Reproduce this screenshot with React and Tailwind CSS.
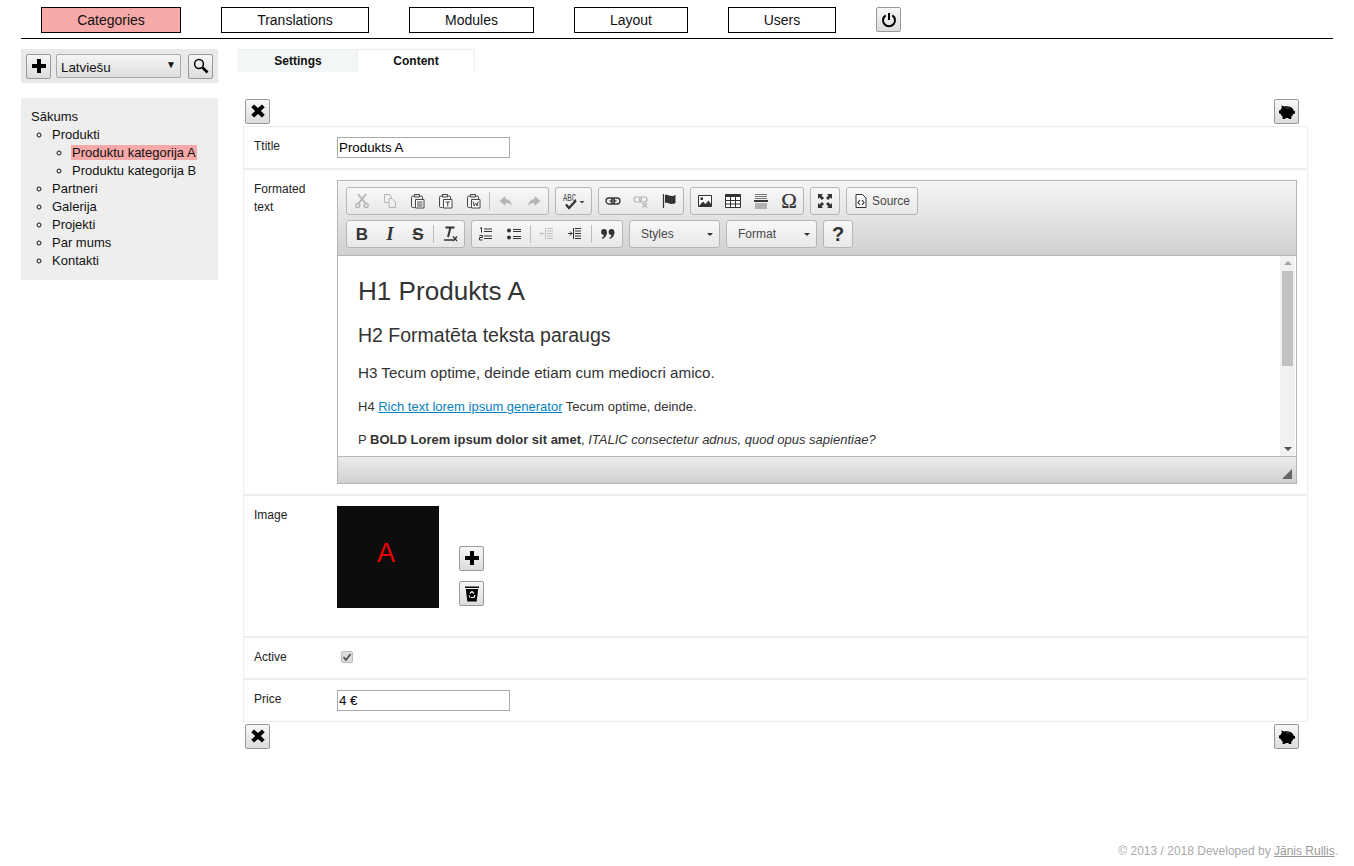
import React from "react";

const S = ({ size = 16, children, className = "", vb = "0 0 16 16" }) => (
  <svg width={size} height={size} viewBox={vb} className={className} aria-hidden="true">{children}</svg>
);

const Plus = () => <S size={16} className="-mt-[1px]"><path d="M6 1h4v5h5v4h-5v5H6v-5H1V6h5z" fill="#000" /></S>;
const Cross = () => <S size={14} className="-mt-[1px] ml-[1px]"><path d="M3.500.500 8 4.600 12.500.500 15.700 3.700 11.300 8l4.400 4.300-3.200 3.200L8 11.400 3.500 15.500.3 12.300 4.700 8 .3 3.700z" fill="#000" /></S>;
const Pig = () => (
  <S size={18} vb="0 0 18 18">
    <path d="M3.200 2.500 6.500 3.600C8 3.100 10.500 3.100 12 3.800 14.200 4.700 15.400 6.300 15.600 7.700L17 8V10.500L15.300 10.900C14.800 12.300 14 13.100 13.300 13.600V16H10.800L10.500 14.900C9.500 15.100 8.400 15.100 7.500 14.900L7.200 16H4.600V13.600C3.500 12.800 2.800 11.800 2.500 10.700L1 10.300V7.500L2.400 7.200C2.800 6.200 3.300 5.400 4 4.800Z" fill="#000" />
    <path d="M8 5h3.500" stroke="#555" strokeWidth="1" />
  </S>
);
const Search = () => (
  <S size={16} className="-mt-[1px]"><circle cx="6" cy="6" r="4.400" fill="none" stroke="#000" strokeWidth="1.500" /><path d="m9.500 9.500 5 5" stroke="#000" strokeWidth="2.600" /></S>
);
const Power = () => (
  <S size={16}><path d="M8 1v7" stroke="#000" strokeWidth="2" /><path d="M4.700 3.300a6 6 0 1 0 6.600 0" fill="none" stroke="#000" strokeWidth="2" /></S>
);
const Bin = () => (
  <S size={18} vb="0 0 18 18">
    <path d="M2 1.500h14v1.500H2z" fill="#000" />
    <path d="M2.800 4h12.400l-1.500 12.500H4.300z" fill="#000" />
    <path d="M7 8.500 9 6.500l2 2M12 10l-1 2.500H8M6 10.500l1 2" fill="none" stroke="#fff" strokeWidth="1.100" />
  </S>
);

const gray = "#b5b5b5";
const dk = "#474747";
const Cut = () => <S><g fill="none" stroke={gray} strokeWidth="1.800"><path d="M4 1 11.500 10.500M12 1 4.500 10.500" /><circle cx="3.800" cy="12.500" r="2" strokeWidth="1.400" /><circle cx="12.200" cy="12.500" r="2" strokeWidth="1.400" /></g></S>;
const Copy = () => <S><path d="M2.500 1.500h5l2 2.500v1.500M7 5.500h3l3.500 3.500v5.500H7z M2.500 1.500v8H7" fill="none" stroke={gray} /></S>;
const Clip = ({ children }) => (
  <S>
    <path d="M4 3H2.800C2 3 1.500 3.500 1.500 4.200v9.300c0 .6.500 1 1 1H4.500M10 3h1.500c.6 0 1 .5 1 1.200V6" fill="none" stroke={dk} strokeWidth="1" />
    <path d="M4.500 1.500h5V4h-5z" fill="#e8e8e8" stroke={dk} />
    <path d="M5.500 6.500h8.500v8.500H5.500z" fill="#fff" stroke={dk} />
    {children}
  </S>
);
const Paste = () => <Clip><path d="M7 9h5.500M7 11h5.500M7 13h5.500" stroke={dk} /></Clip>;
const PasteT = () => <Clip><path d="M7.500 9h4.500M9.750 9v4.500" stroke={dk} strokeWidth="1.100" /></Clip>;
const PasteW = () => <Clip><path d="M7 8.500 8.200 13l1.500-3 1.500 3 1-4.500" stroke={dk} fill="none" /></Clip>;
const Undo = () => <S><path d="M7.500 3 1.500 8l6 5v-3c2.700 0 4.800.700 6.500 2.700C13.500 9 11 6.500 7.500 6z" fill={gray} /></S>;
const Redo = () => <S><path d="M8.500 3l6 5-6 5v-3C5.800 10 3.700 10.700 2 12.700 2.500 9 5 6.500 8.500 6z" fill={gray} /></S>;
const Spell = () => (
  <svg width="24" height="20" viewBox="0 0 24 20" aria-hidden="true">
    <text x="1" y="9.500" fontSize="11" fontFamily="'Liberation Mono',monospace" fill={dk} textLength="13" lengthAdjust="spacingAndGlyphs">ABC</text>
    <path d="M4 13.500 7 17 14 9.500" fill="none" stroke="#333" strokeWidth="2.200" />
    <path d="M17.500 10h5L20 12.500z" fill={dk} />
  </svg>
);
const Link = () => <S><rect x="1" y="5" width="8.500" height="6" rx="3" fill="none" stroke="#333" strokeWidth="1.300" /><rect x="6.500" y="5" width="8.500" height="6" rx="3" fill="none" stroke="#333" strokeWidth="1.300" /><path d="M4.500 8h7" stroke="#333" strokeWidth="1.200" /></S>;
const Unlink = () => <S><rect x="1" y="4" width="7.500" height="5" rx="2.500" fill="none" stroke={gray} strokeWidth="1.200" /><rect x="6.500" y="4" width="7.500" height="5" rx="2.500" fill="none" stroke={gray} strokeWidth="1.200" /><path d="m9.500 10 4.500 4.500m0-4.500-4.500 4.500" stroke={gray} strokeWidth="1.300" /></S>;
const Flag = () => <S><path d="M2.500 1v14" stroke="#333" strokeWidth="1.200" /><path d="M4 2c3-1 4 1 6.500 1 1.500 0 3-.500 4-1v8c-1.200.700-2.500 1-4 1-2.500 0-3.500-2-6.500-1z" fill="#333" /></S>;
const Image = () => <S><path d="M1.500 2.500h13v11h-13z" fill="#fff" stroke="#333" /><path d="M2 13l4-4.500 2.500 2.500 3-3.500L14 11v2.500H2z" fill="#333" /><rect x="3.500" y="4.500" width="2.500" height="2.500" fill="#333" /></S>;
const Table = () => <S><path d="M.500 1.500h15v13H.500z" fill="#fff" stroke="#333" /><path d="M.500 1.500h15v2.500H.500z" fill="#333" /><path d="M.500 7.500h15M.500 11h15M5.500 4v10.500M10.500 4v10.500" stroke="#333" /></S>;
const HRule = () => <S><path d="M2 1.500h12M2 3.500h12M2 5.500h12M2 11h12M2 13h12M2 15h12" stroke="#777" /><path d="M1 8h14" stroke="#222" strokeWidth="1.800" /></S>;
const Omega = () => <span className="text-[21px] leading-none text-[#333] font-['Liberation_Serif',serif] font-normal [-webkit-text-stroke:0.2px_#333]">Ω</span>;
const Max = () => <S><path d="M1 1h5L4.500 2.500 7 5 5 7 2.500 4.500 1 6zM15 1v5l-1.500-1.500L11 7 9 5l2.500-2.500L10 1zM1 15v-5l1.500 1.500L5 9l2 2-2.500 2.500L6 15zM15 15h-5l1.500-1.500L9 11l2-2 2.500 2.500L15 10z" fill="#333" /></S>;
const SourceI = () => <S><path d="M3 1.500h6.500l3.500 3.500v9.500H3z" fill="#fff" stroke="#333" /><path d="M7 7 5 9.500 7 12M9 7l2 2.500L9 12" fill="none" stroke="#333" strokeWidth="1.200" /></S>;
const Bold = () => <span className="text-[17px] leading-none font-bold text-[#333] font-['Liberation_Sans',sans-serif]">B</span>;
const Italic = () => <span className="text-[18px] leading-none italic font-bold text-[#333] font-['Liberation_Serif',serif]">I</span>;
const Strike = () => <span className="text-[17px] leading-none font-bold text-[#333] line-through font-['Liberation_Sans',sans-serif]">S</span>;
const Clear = () => <S><path d="M3.500 1.500h9M8.500 1.500 6 11" stroke="#333" strokeWidth="2" fill="none" /><path d="M2 14h9" stroke="#333" strokeWidth="1.500" /><path d="m11 10.500 4 4.500m0-4.500-4 4.500" stroke="#333" strokeWidth="1.300" /></S>;
const OList = () => <S><path d="M6 3h8M6 5.500h8M6 10h8M6 12.500h8" stroke="#333" /><path d="M2 2.500 3.500 1.500V6.500M1.500 9.500h3v2h-3v2.500h3" fill="none" stroke="#333" /></S>;
const UList = () => <S><circle cx="3" cy="4.500" r="2" fill="#333" /><circle cx="3" cy="11.500" r="2" fill="#333" /><path d="M7 3.500h8M7 5.500h8M7 10.500h8M7 12.500h8" stroke="#333" /></S>;
const Outdent = () => <S><path d="M8 2.500h6M8 5h6M8 7.500h6M8 10h6M8 12.500h6" stroke="#c0c0c0" /><path d="M6.500 2v11" stroke="#c0c0c0" /><path d="M1 7.500h4M1 7.500l2-2M1 7.500l2 2" stroke="#c0c0c0" fill="none" /></S>;
const Indent = () => <S><path d="M8 2.500h6M8 5h6M8 7.500h6M8 10h6M8 12.500h6" stroke="#333" /><path d="M6.500 2v11" stroke="#333" /><path d="M1 7.500h4M5 7.500l-2-2M5 7.500l-2 2" stroke="#333" fill="none" /></S>;
const Quote = () => <S><circle cx="4" cy="6" r="2.900" fill="#333" /><path d="M6.900 6C7 9.500 5 12 2.300 13L1.800 12C3.300 11 4 9.500 4 8z" fill="#333" /><circle cx="11.500" cy="6" r="2.900" fill="#333" /><path d="M14.400 6C14.500 9.500 12.500 12 9.800 13L9.300 12C10.800 11 11.500 9.500 11.500 8z" fill="#333" /></S>;

const Tb = ({ children }) => (
  <div className="w-[28px] h-[26px] flex items-center justify-center shrink-0">{children}</div>
);
const Sep = ({ wide }) => <div className={"w-px h-[18px] bg-[#bcbcbc] self-center shrink-0 mr-[2px] " + (wide ? "ml-[2px]" : "ml-[1px]")} />;
const Group = ({ children, className = "" }) => (
  <div className={"flex h-[28px] items-center rounded-[3px] border border-[#b6b6b6] bg-gradient-to-b from-[#f8f8f8] to-[#e8e8e8] pl-[1px] " + className}>
    {children}
  </div>
);
const Combo = ({ label, w }) => (
  <div className={"flex h-[28px] items-center justify-between rounded-[3px] border border-[#b6b6b6] bg-gradient-to-b from-[#f8f8f8] to-[#e8e8e8] pl-[11px] pr-[6px] text-[12px] text-[#484848] " + w}>
    <span>{label}</span>
    <span className="w-0 h-0 border-x-[3px] border-x-transparent border-t-[3px] border-t-[#333] mt-[1px]" />
  </div>
);

const IconBtn = ({ children }) => (
  <button className="w-[25px] h-[25px] shrink-0 flex items-center justify-center rounded-[2px] border border-[#999] bg-gradient-to-b from-[#f7f7f7] to-[#dcdcdc]">
    {children}
  </button>
);

const NavBtn = ({ children, w, active }) => (
  <div className={"h-[26px] border border-black flex items-center justify-center text-[14px] text-[#111] " + w + " " + (active ? "bg-[#f7a8a8]" : "bg-white")}>
    {children}
  </div>
);

const Row = ({ label, children, className = "" }) => (
  <div className={"flex items-start pt-[10px] pb-[10px] pl-[10px] " + className}>
    <div className="w-[83px] shrink-0 text-[12px] leading-[18px] text-[#222]">{label}</div>
    <div className="flex-1 min-w-0">{children}</div>
  </div>
);

const TextInput = ({ value }) => (
  <input readOnly value={value} className="block w-[173px] h-[21px] border border-[#aaa] px-px text-[13.33px] text-black bg-white outline-none" />
);

export default function App() {
  return (
    <div className="w-[1354px] h-[866px] overflow-hidden bg-white font-['Liberation_Sans',Arial,sans-serif] text-[13px] text-[#111]">
      <div className="px-[21px]">
        <nav className="flex items-start gap-[40px] pl-[20px] pt-[7px] h-[31px] box-content border-b border-black">
          <NavBtn w="w-[140px]" active>Categories</NavBtn>
          <NavBtn w="w-[148px]">Translations</NavBtn>
          <NavBtn w="w-[125px]">Modules</NavBtn>
          <NavBtn w="w-[114px]">Layout</NavBtn>
          <NavBtn w="w-[108px]">Users</NavBtn>
          <IconBtn><Power /></IconBtn>
        </nav>

        <div className="flex mt-[10px]">
          <aside className="w-[197px] shrink-0">
            <div className="flex items-start h-[34px] bg-[#e9e9e9] pt-[5px] pl-[5px]">
              <IconBtn><Plus /></IconBtn>
              <div className="ml-[5px] w-[125px] h-[24px] rounded-[2px] border border-[#aaa] bg-gradient-to-b from-[#f5f5f5] to-[#dedede] flex items-center justify-between pl-[4px] pr-[4px] text-[13.33px]">
                <span className="mt-[3px]">Latviešu</span>
                <span className="text-[10px] leading-none mb-[3px]">▼</span>
              </div>
              <div className="ml-[7px]"><IconBtn><Search /></IconBtn></div>
            </div>
            <div className="mt-[15px] bg-[#eeeeee] pt-[10px] pb-[10px] pl-[10px] leading-[18px]">
              <div>Sākums</div>
              <ul className="list-[circle] pl-[21px]">
                <li>Produkti
                  <ul className="list-[circle] pl-[20px]">
                    <li><span className="bg-[#f7a8a8] px-px -ml-px">Produktu kategorija A</span></li>
                    <li>Produktu kategorija B</li>
                  </ul>
                </li>
                <li>Partneri</li>
                <li>Galerija</li>
                <li>Projekti</li>
                <li>Par mums</li>
                <li>Kontakti</li>
              </ul>
            </div>
          </aside>

          <main className="ml-[20px] w-[1095px] shrink-0">
            <div className="flex h-[23px] text-[12px] font-bold leading-[22px]">
              <div className="w-[119px] text-center bg-[#f2f6f7] border-t border-l border-[#eeeeee] box-border">Settings</div>
              <div className="w-[118px] text-center bg-white border-t border-x border-[#eeeeee] box-border">Content</div>
            </div>

            <div className="ml-[5px] w-[1065px]">
              <div className="flex justify-between pl-[2px] pr-[9px] mt-[27px] mb-[2px]">
                <IconBtn><Cross /></IconBtn>
                <IconBtn><Pig /></IconBtn>
              </div>

              <div className="border border-[#eeeeee] divide-y-2 divide-[#eeeeee]">
                <Row label="Ttitle"><TextInput value="Produkts A" /></Row>
                <Row label={<>Formated<br />text</>}>
                  <div className="w-[960px] h-[304px] border border-[#b6b6b6] flex flex-col">
                    <div className="h-[75px] shrink-0 bg-gradient-to-b from-[#f5f5f5] to-[#cfd1cf] border-b border-[#b6b6b6] pl-[8px] pt-[6px]">
                      <div className="flex gap-[6px]">
                        <Group className="w-[203px]">
                          <Tb><Cut /></Tb><Tb><Copy /></Tb><Tb><Paste /></Tb><Tb><PasteT /></Tb><Tb><PasteW /></Tb>
                          <Sep />
                          <Tb><Undo /></Tb><Tb><Redo /></Tb>
                        </Group>
                        <Group className="w-[37px] justify-center !pl-0"><Spell /></Group>
                        <Group className="w-[86px] !pl-0"><Tb><Link /></Tb><Tb><Unlink /></Tb><Tb><Flag /></Tb></Group>
                        <Group className="w-[114px] !pl-0"><Tb><Image /></Tb><Tb><Table /></Tb><Tb><HRule /></Tb><Tb><Omega /></Tb></Group>
                        <Group className="w-[30px] !pl-0"><Tb><Max /></Tb></Group>
                        <Group className="w-[72px] !pl-[6px] gap-[3px] text-[12px] text-[#484848]"><SourceI /><span>Source</span></Group>
                      </div>
                      <div className="flex gap-[6px] mt-[5px]">
                        <Group className="w-[119px]">
                          <Tb><Bold /></Tb><Tb><Italic /></Tb><Tb><Strike /></Tb>
                          <Sep />
                          <Tb><Clear /></Tb>
                        </Group>
                        <Group className="w-[152px] !pl-0">
                          <Tb><OList /></Tb><Tb><UList /></Tb>
                          <Sep wide />
                          <Tb><Outdent /></Tb><Tb><Indent /></Tb>
                          <Sep wide />
                          <Tb><Quote /></Tb>
                        </Group>
                        <Combo label="Styles" w="w-[91px]" />
                        <Combo label="Format" w="w-[91px]" />
                        <Group className="w-[30px] !pl-0 justify-center"><span className="text-[20px] leading-none font-bold text-[#333]">?</span></Group>
                      </div>
                    </div>

                    <div className="flex-1 min-h-0 flex bg-white">
                      <div className="flex-1 min-w-0 overflow-hidden pl-[20px] pt-[19px] text-[13px] leading-[20px] text-[#333]">
                        <h1 className="text-[26.1px] leading-[32px] font-normal">H1 Produkts A</h1>
                        <h2 className="mt-[15px] text-[19.5px] leading-[26px] font-normal">H2 Formatēta teksta paraugs</h2>
                        <h3 className="mt-[15px] text-[15.2px] leading-[20px] font-normal">H3 Tecum optime, deinde etiam cum mediocri amico.</h3>
                        <p className="mt-[14px]">H4 <span className="text-[#0782c1] underline">Rich text lorem ipsum generator</span> Tecum optime, deinde.</p>
                        <p className="mt-[13px]">P <b>BOLD Lorem ipsum dolor sit amet</b>, <i>ITALIC consectetur adnus, quod opus sapientiae?</i></p>
                      </div>
                      <div className="w-[15px] mr-px shrink-0 bg-[#f1f1f1] flex flex-col items-center">
                        <span className="mt-[5px] w-0 h-0 border-x-[4px] border-x-transparent border-b-[4px] border-b-[#a3a3a3]" />
                        <div className="mt-[6px] w-[11px] h-[95px] bg-[#c1c1c1]" />
                        <span className="mt-auto mb-[5px] w-0 h-0 border-x-[4px] border-x-transparent border-t-[4px] border-t-[#505050]" />
                      </div>
                    </div>

                    <div className="h-[27px] shrink-0 bg-gradient-to-b from-[#ebebeb] to-[#cfd1cf] border-t border-[#b6b6b6] flex items-end justify-end pr-[4px] pb-[4px]">
                      <svg width="10" height="10" viewBox="0 0 10 10" aria-hidden="true"><path d="M10 0v10H0z" fill="#666" /></svg>
                    </div>
                  </div>
                </Row>
                <Row label="Image" className="h-[142px]">
                  <div className="flex items-end">
                    <div className="w-[102px] h-[102px] bg-[#0d0d0d] flex items-center justify-center text-[#f00000] text-[27px] leading-none pr-[4px] pb-[8px] font-['Liberation_Sans',sans-serif]">A</div>
                    <div className="ml-[20px] mb-[2px] flex flex-col gap-[10px]">
                      <IconBtn><Plus /></IconBtn>
                      <IconBtn><Bin /></IconBtn>
                    </div>
                  </div>
                </Row>
                <Row label="Active" className="h-[42px]">
                  <div className="ml-[4px] mt-[3px] w-[12px] h-[12px] rounded-[2px] border border-[#bdbdbd] bg-[#dcdcdc] flex items-center justify-center">
                    <svg width="10" height="10" viewBox="0 0 10 10" aria-hidden="true"><path d="M1.500 5 4 8 8.500 2" fill="none" stroke="#555" strokeWidth="1.900" /></svg>
                  </div>
                </Row>
                <Row label="Price"><TextInput value="4 €" /></Row>
              </div>

              <div className="flex justify-between pl-[2px] pr-[9px] mt-[2px]">
                <IconBtn><Cross /></IconBtn>
                <IconBtn><Pig /></IconBtn>
              </div>
            </div>
          </main>
        </div>
      </div>
      <footer className="mt-[94px] pr-[16px] text-right text-[12px] leading-[16px] text-[#aaa]">
        © 2013 / 2018 Developed by <span className="underline text-[#999]">Jānis Rullis</span>.
      </footer>
    </div>
  );
}
